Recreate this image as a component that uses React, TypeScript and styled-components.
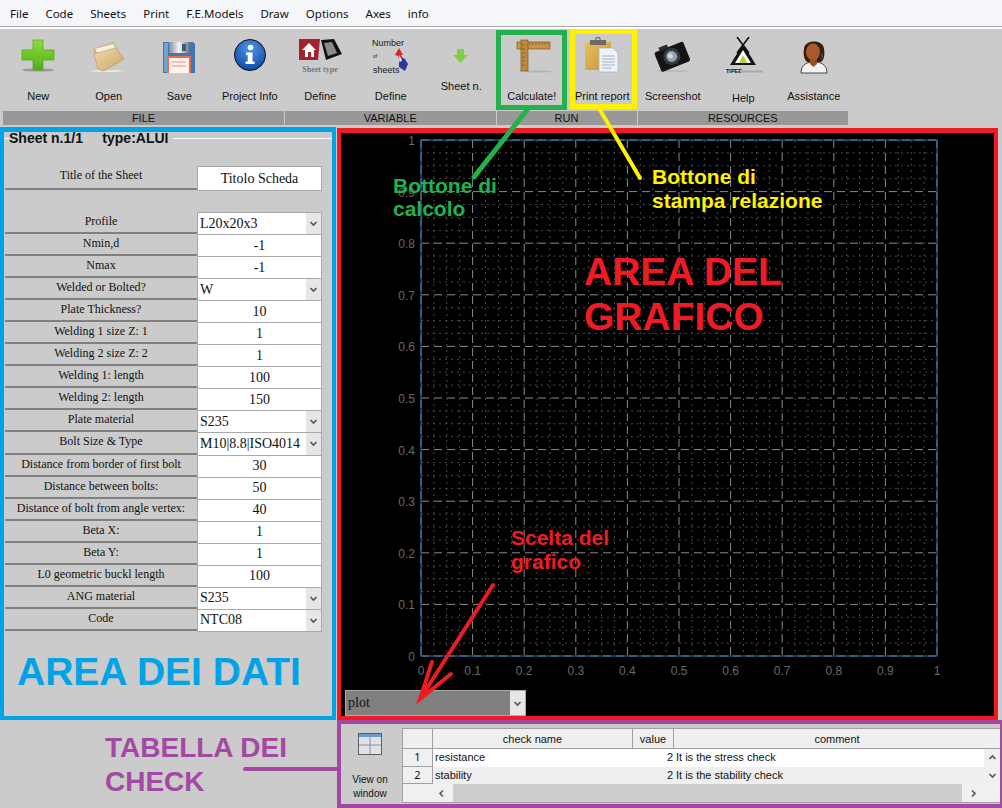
import * as React from 'react';
import styled, { createGlobalStyle } from 'styled-components';

const GlobalStyle = createGlobalStyle`
  html, body {
    margin: 0;
    padding: 0;
    background: #cbcbcb;
  }
  * {
    box-sizing: border-box;
  }
`;

const Page = styled.div`
  position: relative;
  width: 1002px;
  height: 808px;
  overflow: hidden;
  background: #cbcbcb;
  font-family: 'Liberation Sans', Arial, sans-serif;
`;

const MenuBar = styled.nav`
  display: flex;
  gap: 17px;
  align-items: center;
  height: 29px;
  padding: 0 10px 2px;
  background: #f5f6f9;
  border-bottom: 1px solid #fff;
  box-shadow: inset 0 -1px 0 #fff, inset 0 -2px 0 #a8a8a8;
  font-family: 'Noto Sans', 'Open Sans', sans-serif;
  font-size: 11.5px;
  color: #111;
`;

const Toolbar = styled.div`
  display: flex;
  height: 96px;
  margin-left: 3px;
  gap: 0;
`;

const ToolGroup = styled.section<{ $count: number }>`
  display: flex;
  flex-direction: column;
  width: ${(p) => p.$count * 70.5}px;
`;

const ToolRow = styled.div`
  display: flex;
  flex: 1;
`;

const Tool = styled.button`
  flex: 1;
  display: flex;
  flex-direction: column;
  align-items: center;
  padding: 8px 0 0;
  border: 0;
  background: transparent;
  font: 11px 'Liberation Sans', Arial, sans-serif;
  color: #111;
`;

const ToolLabel = styled.span<{ $gap?: number }>`
  margin-top: ${(p) => p.$gap ?? 13}px;
  line-height: 13px;
  white-space: nowrap;
`;

const GroupTitle = styled.div`
  height: 14px;
  line-height: 14px;
  margin-right: 1px;
  background: #989898;
  text-align: center;
  font-size: 11px;
  color: #111;
`;

const Workspace = styled.main`
  display: grid;
  grid-template-columns: 337px 665px;
  grid-template-rows: 593px 88px;
  margin-top: 2px;
`;

const DataPanel = styled.section`
  overflow: hidden;
  border: 4px solid #00a2e8;
  border-top-width: 5px;
  background: #cbcbcb;
  width: 336px;
`;

const SheetTitle = styled.div`
  display: flex;
  align-items: center;
  height: 13px;
  margin-bottom: 21px;
`;

const TitleRule = styled.span<{ $short?: boolean }>`
  flex: ${(p) => (p.$short ? '0 0 5px' : '1')};
  height: 1px;
  background: #fff;
`;

const SheetText = styled.strong`
  padding: 0 5px 0 0;
  margin-top: 0;
  font-size: 14px;
  line-height: 13px;
  white-space: pre;
  color: #111;
`;

const FieldRow = styled.div<{ $tall?: boolean }>`
  display: grid;
  grid-template-columns: 193px 125px;
  height: ${(p) => (p.$tall ? 24 : 22.05)}px;
`;

const FieldLabel = styled.div`
  overflow: hidden;
  height: calc(100% + 0px);
  padding-top: 3px;
  margin-left: 1px;
  border-bottom: 2px solid #808080;
  font-family: 'Liberation Serif', 'Times New Roman', serif;
  font-size: 12px;
  line-height: 13px;
  white-space: pre-line;
  text-align: center;
  color: #111;
`;

const FieldBox = styled.div<{ $select?: boolean }>`
  display: flex;
  align-items: center;
  justify-content: ${(p) => (p.$select ? 'space-between' : 'center')};
  height: calc(100% + 1px);
  padding-left: ${(p) => (p.$select ? 2 : 0)}px;
  background: #fff;
  border: 1px solid #a9a9a9;
  font-family: 'Liberation Serif', 'Times New Roman', serif;
  font-size: 14px;
  color: #111;
`;

const Caret = styled.span`
  display: flex;
  align-items: center;
  justify-content: center;
  align-self: stretch;
  width: 15px;
  background: #e6e6e6;
  color: #555;
`;

const RowGap = styled.div`
  height: 22px;
`;

const PlotPanel = styled.section`
  display: flex;
  flex-direction: column;
  height: 592px;
  width: 661px;
  margin-top: 1px;
  border: 4px solid #ed1c24;
  border-top-width: 5px;
  background: #000;
`;

const PlotSvg = styled.svg`
  display: block;
  flex: none;
`;

const PlotSelect = styled.div`
  display: flex;
  align-items: center;
  justify-content: space-between;
  width: 181px;
  height: 26px;
  margin: 2px 0 0 4px;
  padding-left: 2px;
  background: #808080;
  border: 1px solid #a9a9a9;
  font-family: 'Liberation Serif', 'Times New Roman', serif;
  font-size: 14px;
  color: #111;
`;

const EmptyCorner = styled.div`
  background: #cbcbcb;
`;

const CheckPanel = styled.section`
  display: flex;
  width: 665px;
  height: 88px;
  border: 4px solid #a349a4;
  border-right-width: 2px;
  background: #cbcbcb;
`;

const ViewButton = styled.button`
  flex: 0 0 61px;
  display: flex;
  flex-direction: column;
  align-items: center;
  padding: 9px 3px 0 0;
  border: 0;
  background: transparent;
  font: 10px/14px 'Liberation Sans', Arial, sans-serif;
  color: #111;
`;

const ViewText = styled.span`
  margin-top: 18px;
`;

const CheckTable = styled.div`
  flex: 1;
  display: flex;
  flex-direction: column;
  height: 75px;
  margin-top: 4px;
  background: #f0f0f0;
  border: 1px solid #a0a0a0;
  border-right: 0;
  font-size: 11px;
  color: #111;
`;

const TableRow = styled.div<{ $head?: boolean; $alt?: boolean }>`
  display: grid;
  grid-template-columns: 30px 200px 41px 1fr;
  height: ${(p) => (p.$head ? 20 : 17.5)}px;
  line-height: ${(p) => (p.$head ? 21 : 16)}px;
  background: ${(p) => (p.$head || p.$alt ? '#efefef' : '#fff')};
  ${(p) => p.$head && 'border-bottom: 1px solid #a0a0a0;'}
`;

const HeadCell = styled.div`
  text-align: center;
  border-right: 1px solid #a0a0a0;
  &:last-child {
    border-right: 0;
  }
`;

const IndexCell = styled.div`
  background: #f0f0f0;
  text-align: center;
  font-family: 'Noto Sans', sans-serif;
  font-size: 11px;
  border-right: 1px solid #a0a0a0;
  border-bottom: 1px solid #a0a0a0;
`;

const TextCell = styled.div`
  padding-left: 2px;
  white-space: nowrap;
`;

const ValueCell = styled.div`
  padding-right: 1px;
  text-align: right;
`;

const TableBody = styled.div`
  display: flex;
`;

const RowsColumn = styled.div`
  flex: 1;
`;

const VerticalBar = styled.div`
  flex: 0 0 16px;
  display: flex;
  flex-direction: column;
  align-items: center;
  justify-content: space-around;
  color: #555;
  background: #f0f0f0;
`;

const HorizontalBar = styled.div`
  display: flex;
  align-items: center;
  flex: 1;
  margin-right: 16px;
  padding: 0 6px 0 34px;
  color: #555;
  gap: 7px;
`;

const Thumb = styled.div`
  flex: 1;
  align-self: stretch;
  background: #cdcdcd;
`;

const Overlay = styled.svg`
  position: absolute;
  inset: 0;
  pointer-events: none;
`;

const Callout = styled.div<{ $x: number; $y: number; $color: string; $size: number; $lead: number }>`
  position: absolute;
  left: ${(p) => p.$x}px;
  top: ${(p) => p.$y}px;
  color: ${(p) => p.$color};
  font-size: ${(p) => p.$size}px;
  line-height: ${(p) => p.$lead}px;
  font-weight: 700;
  white-space: pre;
  pointer-events: none;
`;

const Frame = styled.div<{ $x: number; $w: number; $y: number; $color: string }>`
  position: absolute;
  left: ${(p) => p.$x}px;
  top: ${(p) => p.$y}px;
  width: ${(p) => p.$w}px;
  height: 80px;
  border: 5px solid ${(p) => p.$color};
  pointer-events: none;
`;

const Chevron = ({ dir = 'down' }: { dir?: 'down' | 'up' | 'left' | 'right' }) => {
  const paths = {
    down: 'M1.5 3 L4.5 6 L7.5 3',
    up: 'M1.5 6 L4.5 3 L7.5 6',
    left: 'M6 1.5 L3 4.5 L6 7.5',
    right: 'M3 1.5 L6 4.5 L3 7.5',
  };
  return (
    <svg width="9" height="9" viewBox="0 0 9 9" fill="none" stroke="currentColor" strokeWidth="1.6">
      <path d={paths[dir]} />
    </svg>
  );
};

const IconBox = ({ children }: { children: React.ReactNode }) => (
  <svg width="60" height="40" viewBox="0 0 60 40">
    {children}
  </svg>
);

const NewIcon = () => (
  <IconBox>
    <defs>
      <linearGradient id="plusG" x1="0" y1="0" x2="0" y2="1">
        <stop offset="0" stopColor="#8fdc3c" />
        <stop offset="1" stopColor="#4fae17" />
      </linearGradient>
    </defs>
    <ellipse cx="30" cy="33" rx="16" ry="1.6" fill="#9a9a9a" />
    <path d="M25 3h10v10h11v10H35v10H25V23H14V13h11z" fill="url(#plusG)" stroke="#58a81f" strokeWidth="0.8" />
  </IconBox>
);

const OpenIcon = () => (
  <IconBox>
    <defs>
      <linearGradient id="folderG" x1="0" y1="0" x2="1" y2="1">
        <stop offset="0" stopColor="#f2dcae" />
        <stop offset="1" stopColor="#cda262" />
      </linearGradient>
    </defs>
    <ellipse cx="28" cy="34" rx="17" ry="0.9" fill="#e8e8e8" />
    <path d="M14 12 L34 5 L39 13 L17 20z" fill="#d4b27c" />
    <path d="M16 12 L34 7 L37 12 L19 17z" fill="#f4efe2" />
    <path d="M15 17 L37 11 L45 22 L25 34 L19 32z" fill="url(#folderG)" stroke="#b98f52" strokeWidth="0.6" />
  </IconBox>
);

const SaveIcon = () => (
  <IconBox>
    <defs>
      <linearGradient id="shutterG" x1="0" y1="0" x2="1" y2="0">
        <stop offset="0" stopColor="#7f8d99" />
        <stop offset="0.5" stopColor="#f3f5f7" />
        <stop offset="1" stopColor="#6f7c88" />
      </linearGradient>
    </defs>
    <path d="M14 5 H44 L46 7 V36 H14z" fill="#3f78ad" />
    <rect x="15" y="6" width="4" height="29" fill="#6fa3d0" />
    <rect x="20" y="5" width="20" height="11" fill="url(#shutterG)" />
    <rect x="33" y="7" width="4" height="7" fill="#45586a" />
    <rect x="18" y="19" width="24" height="17" fill="#ef6a4c" />
    <rect x="20" y="21" width="20" height="15" fill="#fff4ee" />
    <path d="M23 25h14M23 29h14" stroke="#ef8a6c" strokeWidth="1" />
  </IconBox>
);

const InfoIcon = () => (
  <IconBox>
    <defs>
      <radialGradient id="infoG" cx="0.5" cy="0.3" r="0.8">
        <stop offset="0" stopColor="#4f96ea" />
        <stop offset="1" stopColor="#063f9b" />
      </radialGradient>
    </defs>
    <circle cx="30" cy="18" r="15.5" fill="url(#infoG)" stroke="#111" strokeWidth="1" />
    <circle cx="30.5" cy="10.5" r="2.8" fill="#fff" />
    <path d="M26 15.5h6.5v9h2v2.5h-9v-2.5h2.2v-6.5h-1.7z" fill="#fff" />
  </IconBox>
);

const SheetTypeIcon = () => (
  <IconBox>
    <path d="M9 2h21l-2 21H9z" fill="#a3222e" />
    <path d="M12 13 L19 6 L26 13 h-2 v7 h-3 v-5 h-3 v5 h-3 v-7z" fill="#fff" />
    <path d="M31 3 L44 2 L52 17 L36 23z" fill="#111" />
    <path d="M34 6 L42 5 L47 16 L38 19z" fill="#8a8a8a" />
    <text x="30" y="35" textAnchor="middle" fontFamily="'Liberation Serif', serif" fontWeight="700" fontSize="8" fill="#777">
      Sheet type
    </text>
  </IconBox>
);

const SheetCountIcon = () => (
  <IconBox>
    <text x="11" y="9" fontSize="9" fill="#222" fontFamily="'Liberation Sans', sans-serif">Number</text>
    <text x="12" y="21" fontSize="5" fill="#222" fontFamily="'Liberation Sans', sans-serif">of</text>
    <text x="12" y="36" fontSize="9" fill="#222" fontFamily="'Liberation Sans', sans-serif">sheets</text>
    <path d="M34 18 L38 11 L42 18 L40 18 L43 24 L40 26 L37 19z" fill="#d7262e" />
    <path d="M38 26 L40 20 L44 22 L47 27 L44 34 L38 30z" fill="#2b3a94" />
    <path d="M38 18 L41 23 L39 25z" fill="#fff" />
  </IconBox>
);

const SheetDownIcon = () => (
  <IconBox>
    <path d="M26 12h7v6h4l-7.5 8L22 18h4z" fill="#7ed04a" />
  </IconBox>
);

const RulerIcon = () => (
  <IconBox>
    <ellipse cx="36" cy="34.5" rx="14" ry="0.9" fill="#b5b5b5" />
    <rect x="15" y="5" width="33" height="7" fill="#c79645" stroke="#7a5a24" strokeWidth="0.7" />
    <rect x="19" y="3" width="7" height="31" fill="#c0883a" stroke="#7a5a24" strokeWidth="0.7" />
    <path d="M28 5v3M31 5v3M34 5v3M37 5v3M40 5v3M43 5v3M46 5v3M20 8h3M20 12h3M20 16h3M20 20h3M20 24h3M20 28h3" stroke="#6d4e1c" strokeWidth="0.6" />
  </IconBox>
);

const ClipboardIcon = () => (
  <IconBox>
    <defs>
      <linearGradient id="boardG" x1="0" y1="0" x2="1" y2="1">
        <stop offset="0" stopColor="#eabf5f" />
        <stop offset="1" stopColor="#c49439" />
      </linearGradient>
    </defs>
    <rect x="13" y="5" width="26" height="28" rx="1.5" fill="url(#boardG)" />
    <rect x="18" y="3" width="16" height="5" fill="#6b6b6b" />
    <circle cx="26" cy="2.5" r="2.2" fill="none" stroke="#6b6b6b" strokeWidth="1.2" />
    <path d="M27 11h14l5 5v19H27z" fill="#eef3fa" stroke="#9fb0c6" strokeWidth="0.7" />
    <path d="M30 19h13M30 22h13M30 25h13M30 28h13M30 31h9" stroke="#8ea1bb" strokeWidth="0.8" />
  </IconBox>
);

const CameraIcon = () => (
  <IconBox>
    <ellipse cx="30" cy="34" rx="17" ry="0.9" fill="#b8b8b8" />
    <g transform="rotate(-22 30 20)">
      <rect x="14" y="9" width="31" height="21" rx="2" fill="#141414" />
      <rect x="20" y="6" width="9" height="4" fill="#2a2a2a" />
      <circle cx="29" cy="19" r="8.5" fill="#3a3a3a" />
      <circle cx="29" cy="19" r="5.5" fill="#8fa4b4" />
      <circle cx="28" cy="18" r="2.5" fill="#cfdae2" />
    </g>
  </IconBox>
);

const TipiIcon = () => (
  <IconBox>
    <path d="M24 0 L36 16 M36 0 L24 16" stroke="#111" strokeWidth="1.6" />
    <path d="M30 7 L43 28 H17z" fill="#111" />
    <path d="M30 13 L38 26 H22z" fill="#fff" />
    <path d="M30 18 L34 26 H26z" fill="#b4d432" />
    <text x="13" y="36" fontSize="5.5" fontWeight="700" fill="#111" fontFamily="'Liberation Sans', sans-serif">TIPEE</text>
    <rect x="27" y="33.5" width="23" height="2" fill="#aaa" />
  </IconBox>
);

const AssistIcon = () => (
  <IconBox>
    <path d="M17 36 C17 27 24 25 30 25 C36 25 43 27 43 36z" fill="#f2f2f2" stroke="#222" strokeWidth="0.8" />
    <path d="M20 12 C20 2 40 2 40 12 C41 18 40 23 37 25 L23 25 C20 22 19 18 20 12z" fill="#3a1c10" />
    <ellipse cx="29" cy="15" rx="7" ry="8.5" fill="#a85a2c" />
    <path d="M26 22 h7 v5 l-3.5 3 l-3.5 -3z" fill="#9a5026" />
    <path d="M37 16 a2 3 0 0 1 0 6" fill="#444" />
    <path d="M37 22 q-2 3 -6 2" stroke="#333" strokeWidth="0.8" fill="none" />
  </IconBox>
);

const TableIcon = () => (
  <svg width="24" height="22" viewBox="0 0 24 22">
    <rect x="0.5" y="0.5" width="23" height="21" fill="#dfe3e8" stroke="#5a5f66" />
    <rect x="1" y="1" width="22" height="3" fill="#6a9ac9" />
    <path d="M12 4v17M1 12h22" stroke="#8b9097" />
  </svg>
);

const SECTIONS = [
  {
    title: 'FILE',
    tools: [
      { label: 'New', icon: <NewIcon /> },
      { label: 'Open', icon: <OpenIcon /> },
      { label: 'Save', icon: <SaveIcon /> },
      { label: 'Project Info', icon: <InfoIcon /> },
    ],
  },
  {
    title: 'VARIABLE',
    tools: [
      { label: 'Define', icon: <SheetTypeIcon /> },
      { label: 'Define', icon: <SheetCountIcon /> },
      { label: 'Sheet n.', icon: <SheetDownIcon />, gap: 3 },
    ],
  },
  {
    title: 'RUN',
    tools: [
      { label: 'Calculate!', icon: <RulerIcon /> },
      { label: 'Print report', icon: <ClipboardIcon /> },
    ],
  },
  {
    title: 'RESOURCES',
    tools: [
      { label: 'Screenshot', icon: <CameraIcon /> },
      { label: 'Help', icon: <TipiIcon />, gap: 15 },
      { label: 'Assistance', icon: <AssistIcon /> },
    ],
  },
];

const MENU = ['File', 'Code', 'Sheets', 'Print', 'F.E.Models', 'Draw', 'Options', 'Axes', 'info'];

const FIELDS: { label: string; value: string; select?: boolean }[] = [
  { label: 'Profile', value: 'L20x20x3', select: true },
  { label: 'Nmin,d', value: '-1' },
  { label: 'Nmax', value: '-1' },
  { label: 'Welded or Bolted?', value: 'W', select: true },
  { label: 'Plate Thickness?', value: '10' },
  { label: 'Welding 1 size Z: 1', value: '1' },
  { label: 'Welding 2 size Z: 2', value: '1' },
  { label: 'Welding 1: length', value: '100' },
  { label: 'Welding 2: length', value: '150' },
  { label: 'Plate material', value: 'S235', select: true },
  { label: 'Bolt Size & Type', value: 'M10|8.8|ISO4014', select: true },
  { label: 'Distance from border of first bolt\n:', value: '30' },
  { label: 'Distance between bolts:', value: '50' },
  { label: 'Distance of bolt from angle vertex:', value: '40' },
  { label: 'Beta X:', value: '1' },
  { label: 'Beta Y:', value: '1' },
  { label: 'L0 geometric buckl length', value: '100' },
  { label: 'ANG material', value: 'S235', select: true },
  { label: 'Code', value: 'NTC08', select: true },
];

const PLOT_LEFT = 421;
const PLOT_TOP = 141;
const PLOT_SIZE = 516;
const STEPS = Array.from({ length: 41 }, (_, i) => i);

const Chart = () => (
  <PlotSvg width="653" height="555" viewBox="341 134 653 555">
    {STEPS.map((i) => {
      const d = (i / 40) * PLOT_SIZE;
      const major = i % 4 === 0;
      const stroke = major ? '#8a8a8a' : '#4a4a4a';
      const dash = major ? '8 5' : '2 4';
      return (
        <g key={i} stroke={stroke} strokeDasharray={dash} strokeWidth="1">
          <line x1={PLOT_LEFT + d} y1={PLOT_TOP} x2={PLOT_LEFT + d} y2={PLOT_TOP + PLOT_SIZE} />
          <line x1={PLOT_LEFT} y1={PLOT_TOP + d} x2={PLOT_LEFT + PLOT_SIZE} y2={PLOT_TOP + d} />
        </g>
      );
    })}
    <rect x={PLOT_LEFT} y={PLOT_TOP} width={PLOT_SIZE} height={PLOT_SIZE} fill="none" stroke="#2b76ad" strokeWidth="1" />
    {Array.from({ length: 11 }, (_, i) => {
      const label = i === 0 ? '0' : i === 10 ? '1' : `0.${i}`;
      const d = (i / 10) * PLOT_SIZE;
      return (
        <g key={i} fill="#686868" fontSize="12" fontFamily="'Liberation Sans', sans-serif">
          <text x={PLOT_LEFT + d} y={PLOT_TOP + PLOT_SIZE + 19} textAnchor="middle">{label}</text>
          <text x={PLOT_LEFT - 6} y={PLOT_TOP + PLOT_SIZE - d + 5} textAnchor="end">{label}</text>
        </g>
      );
    })}
  </PlotSvg>
);

const App = () => (
  <Page>
    <GlobalStyle />
    <MenuBar>
      {MENU.map((m) => (
        <span key={m}>{m}</span>
      ))}
    </MenuBar>
    <Toolbar>
      {SECTIONS.map((s) => (
        <ToolGroup key={s.title} $count={s.tools.length}>
          <ToolRow>
            {s.tools.map((t, i) => (
              <Tool key={i}>
                {t.icon}
                <ToolLabel $gap={t.gap}>{t.label}</ToolLabel>
              </Tool>
            ))}
          </ToolRow>
          <GroupTitle>{s.title}</GroupTitle>
        </ToolGroup>
      ))}
    </Toolbar>
    <Workspace>
      <DataPanel>
        <SheetTitle>
          <TitleRule $short />
          <SheetText>{'Sheet n.1/1     type:ALUI'}</SheetText>
          <TitleRule />
        </SheetTitle>
        <FieldRow $tall>
          <FieldLabel>Title of the Sheet</FieldLabel>
          <FieldBox>Titolo Scheda</FieldBox>
        </FieldRow>
        <RowGap />
        {FIELDS.map((f) => (
          <FieldRow key={f.label}>
            <FieldLabel>{f.label}</FieldLabel>
            <FieldBox $select={f.select}>
              {f.value}
              {f.select && (
                <Caret>
                  <Chevron />
                </Caret>
              )}
            </FieldBox>
          </FieldRow>
        ))}
      </DataPanel>
      <PlotPanel>
        <Chart />
        <PlotSelect>
          plot
          <Caret>
            <Chevron />
          </Caret>
        </PlotSelect>
      </PlotPanel>
      <EmptyCorner />
      <CheckPanel>
        <ViewButton>
          <TableIcon />
          <ViewText>
            View on
            <br />
            window
          </ViewText>
        </ViewButton>
        <CheckTable>
          <TableRow $head>
            <HeadCell />
            <HeadCell>check name</HeadCell>
            <HeadCell>value</HeadCell>
            <HeadCell>comment</HeadCell>
          </TableRow>
          <TableBody>
            <RowsColumn>
              <TableRow>
                <IndexCell>1</IndexCell>
                <TextCell>resistance</TextCell>
                <ValueCell>2</ValueCell>
                <TextCell>It is the stress check</TextCell>
              </TableRow>
              <TableRow $alt>
                <IndexCell>2</IndexCell>
                <TextCell>stability</TextCell>
                <ValueCell>2</ValueCell>
                <TextCell>It is the stability check</TextCell>
              </TableRow>
            </RowsColumn>
            <VerticalBar>
              <Chevron dir="up" />
              <Chevron dir="down" />
            </VerticalBar>
          </TableBody>
          <HorizontalBar>
            <Chevron dir="left" />
            <Thumb />
            <Chevron dir="right" />
          </HorizontalBar>
        </CheckTable>
      </CheckPanel>
    </Workspace>

    <Frame $x={496} $y={30} $w={71} $color="#22b14c" />
    <Frame $x={570} $y={29} $w={67} $color="#fff200" />
    <Overlay width="1002" height="808" viewBox="0 0 1002 808" fill="none" strokeLinecap="round">
      <path d="M527 110 L474 177" stroke="#22b14c" strokeWidth="5" />
      <path d="M600 110 L640 178" stroke="#fff200" strokeWidth="4" />
      <path d="M245 769 H337" stroke="#a349a4" strokeWidth="4" />
      <path d="M493 585 L420 699 M432 662 L420 699 L451 674" stroke="#ed1c24" strokeWidth="4" />
    </Overlay>
    <Callout $x={393} $y={174} $color="#22b14c" $size={21} $lead={23}>{'Bottone di\ncalcolo'}</Callout>
    <Callout $x={652} $y={165} $color="#fff200" $size={21} $lead={24}>{'Bottone di\nstampa relazione'}</Callout>
    <Callout $x={584} $y={249} $color="#ed1c24" $size={39} $lead={45}>{'AREA DEL\nGRAFICO'}</Callout>
    <Callout $x={511} $y={526} $color="#ed1c24" $size={21} $lead={24}>{'Scelta del\ngrafico'}</Callout>
    <Callout $x={17} $y={649} $color="#00a2e8" $size={39} $lead={45}>AREA DEI DATI</Callout>
    <Callout $x={105} $y={731} $color="#a349a4" $size={28} $lead={34}>{'TABELLA DEI\nCHECK'}</Callout>
  </Page>
);

export default App;
